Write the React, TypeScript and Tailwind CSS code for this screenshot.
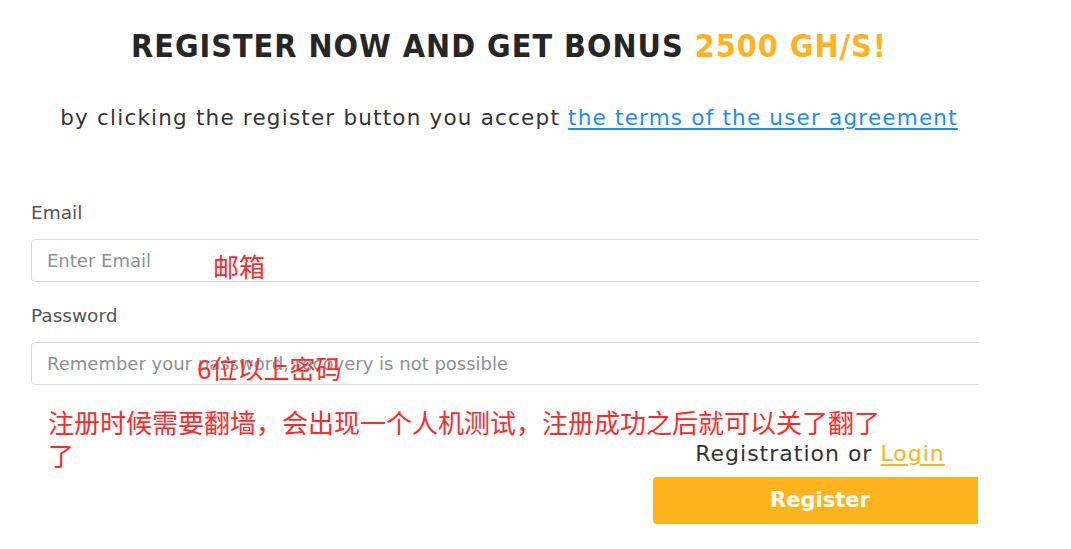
import React from 'react';

const sans = "font-['DejaVu_Sans','Open_Sans',sans-serif]";
const cjk = "font-['Noto_Sans_CJK_SC',sans-serif]";

const Field: React.FC<{ label: string; placeholder: string; type?: string }> = ({ label, placeholder, type = 'text' }) => (
  <div className="flex flex-col">
    <label className={`${sans} text-[18.5px] leading-[24px] text-[#555]`}>{label}</label>
    <input
      type={type}
      placeholder={placeholder}
      className={`${sans} mt-[14px] h-[43px] w-full rounded-[4px] border border-[#d7dce1] bg-white px-[15px] text-[18px] text-[#333] placeholder:text-[#8d9196] outline-none`}
    />
  </div>
);

export default function App() {
  return (
    <div className="relative h-[549px] w-[1071px] overflow-hidden bg-white">
      <div className="w-[978px] overflow-hidden">
        <div className="ml-[31px] flex w-[956px] flex-col">
          <h1 className="mt-[24px] text-center font-['DejaVu_Sans_Condensed','DejaVu_Sans',sans-serif] text-[32px] font-bold leading-[44px] tracking-[1px] text-[#262626]">
            REGISTER NOW AND GET BONUS <span className="text-[#ffb320]">2500 GH/S!</span>
          </h1>
          <p className={`${sans} mt-[35px] text-center text-[21.5px] leading-[30px] tracking-[1.2px] text-[#333]`}>
            by clicking the register button you accept{' '}
            <a href="#" className="text-[#1a8cff] underline underline-offset-[3px]">
              the terms of the user agreement
            </a>
          </p>

          <div className="mt-[68px] flex flex-col gap-[22px]">
            <Field label="Email" placeholder="Enter Email" type="email" />
            <Field label="Password" placeholder="Remember your password, recovery is not possible" type="password" />
          </div>

          <div className="mt-[54px] flex flex-col items-end">
            <div className="w-[334px] text-center">
              <span className={`${sans} text-[22px] leading-[30px] tracking-[1px] text-[#333]`}>
                Registration or{' '}
                <a href="#" className="text-[#ffb320] underline underline-offset-[3px]">
                  Login
                </a>
              </span>
            </div>
            <button className={`${sans} mt-[8px] h-[47px] w-[334px] rounded-[4px] bg-[#ffb41e] text-[21px] font-bold text-white`}>
              Register
            </button>
          </div>
        </div>
      </div>

      <span className={`${cjk} absolute left-[213px] top-[249px] text-[26px] leading-[33px] text-[#ff2a2a]`}>邮箱</span>
      <span className={`${cjk} absolute left-[197px] top-[351px] text-[26px] leading-[33px] text-[#ff2a2a]`}>6位以上密码</span>
      <p className={`${cjk} absolute left-[48px] top-[405px] w-[848px] text-[26px] leading-[33px] text-[#ff2a2a]`}>
        注册时候需要翻墙，会出现一个人机测试，注册成功之后就可以关了翻了了
      </p>
    </div>
  );
}
